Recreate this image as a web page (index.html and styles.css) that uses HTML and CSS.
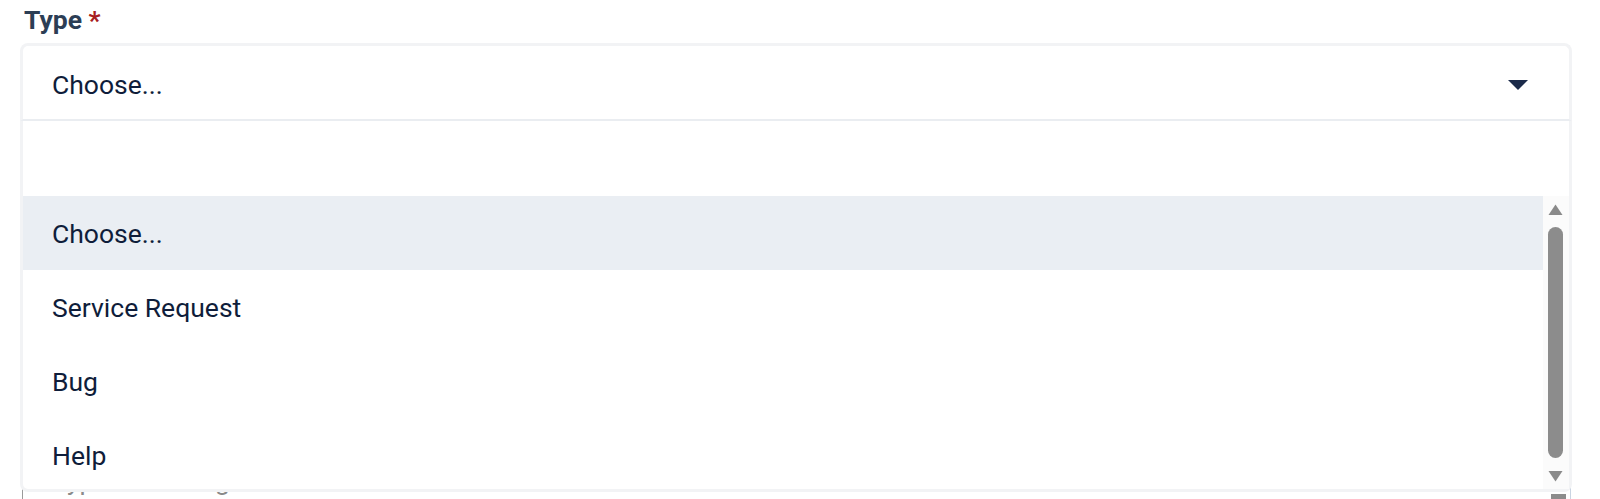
FILE: index.html
```html
<!DOCTYPE html>
<html lang="en">
<head>
<meta charset="utf-8">
<title>Type select</title>
<link rel="stylesheet" href="styles.css">
</head>
<body>
<div class="page">
  <label class="label">Type <span class="req">*</span></label>
  <div class="select">
    <div class="select-head">
      <span class="value">Choose...</span>
      <svg class="caret" width="20" height="10" viewBox="0 0 20 10"><path d="M0 0 H20 L10 10 Z" fill="#1b2a4a"/></svg>
    </div>
    <div class="dropdown">
      <div class="search"></div>
      <div class="list-wrap">
        <ul class="list">
          <li class="option active">Choose...</li>
          <li class="option">Service Request</li>
          <li class="option">Bug</li>
          <li class="option">Help</li>
        </ul>
        <div class="scrollbar">
          <svg class="arrow up" width="15" height="11" viewBox="0 0 15 11"><path d="M7.5 0.5 L14.5 11 H0.5 Z" fill="#8a8a8a"/></svg>
          <div class="thumb"></div>
          <svg class="arrow down" width="15" height="11" viewBox="0 0 15 11"><path d="M0.5 0 H14.5 L7.5 10.5 Z" fill="#8a8a8a"/></svg>
        </div>
      </div>
    </div>
    <div class="next">
      <span class="placeholder">Type a message</span>
      <div class="next-thumb"></div>
    </div>
  </div>
</div>
</body>
</html>
```
FILE: styles.css
```css
* { box-sizing: border-box; }
html, body { margin: 0; padding: 0; background: #ffffff; overflow: hidden; }
body { font-family: Roboto, "Liberation Sans", sans-serif; color: #0f1d3a; }
.page { padding: 5px 28px 0 20px; height: 499px; overflow: hidden; }
.label {
  display: block;
  margin: 0 0 8px 4px;
  font-size: 26.5px;
  line-height: 30px;
  font-weight: 700;
  color: #2c3e55;
}
.req { color: #a81d22; }
.select { position: relative; }
.select-head {
  height: 78px;
  border: 3px solid #f2f3f5;
  border-bottom: 2px solid #eaedf1;
  border-radius: 8px 8px 0 0;
  display: flex;
  align-items: center;
  justify-content: space-between;
  padding: 5px 41px 0 29px;
  background: #ffffff;
}
.value { font-size: 26.5px; line-height: 30px; color: #0f1d3a; }
.caret { display: block; }
.dropdown {
  position: absolute;
  top: 78px;
  left: 0;
  right: 0;
  z-index: 2;
  background: #ffffff;
  border: 3px solid #f2f3f5;
  border-top: 0;
  border-radius: 0 0 8px 8px;
}
.search { height: 75px; }
.list-wrap { display: flex; height: 293px; overflow: hidden; }
.list { list-style: none; margin: 0; padding: 0; flex: 1; }
.option {
  height: 74px;
  flex: none;
  display: flex;
  align-items: center;
  padding: 1px 0 0 29px;
  font-size: 26.5px;
  line-height: 30px;
  color: #0f1d3a;
}
.option.active { background: #eaeef3; }
.scrollbar {
  width: 26px;
  background: #fbfbfb;
  display: flex;
  flex-direction: column;
  align-items: center;
  padding: 8px 1px 0 0;
}
.arrow { display: block; flex: none; }
.thumb {
  width: 15px;
  height: 231px;
  flex: none;
  margin: 12px 0 13px;
  background: #8c8c8c;
  border-radius: 8px;
}
.next {
  display: flex;
  justify-content: space-between;
  margin-left: 2px;
  margin-right: 1px;
  height: 420px;
  padding: 345px 4px 0 29px;
  border-left: 1px solid #9a9a9a;
  border-right: 1px solid #c9d4e2;
}
.placeholder { font-size: 26.5px; line-height: 30px; color: #8a8a8a; }
.next-thumb { width: 15px; height: 60px; margin-top: 28px; background: #8c8c8c; }
```
